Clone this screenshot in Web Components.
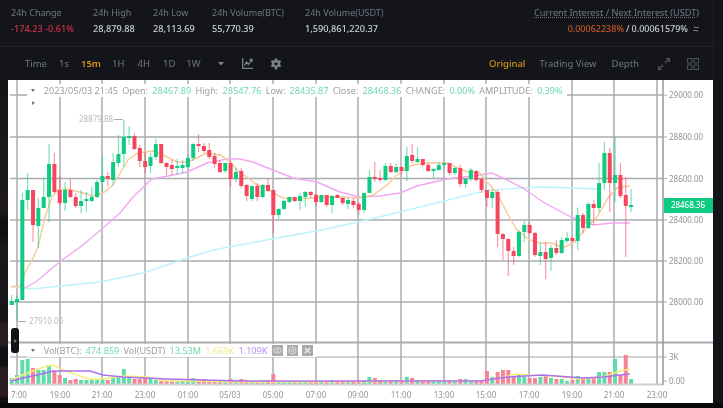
<!DOCTYPE html>
<html>
<head>
<meta charset="utf-8">
<style>
	html { background: #14151a; overflow: hidden; }
	body { margin: 0; width: 723px; height: 408px; overflow: hidden; filter: blur(.5px); font-family: "Noto Sans", "Liberation Sans", sans-serif; }
</style>
</head>
<body>

<template id="t-page-shell">
	<style>
		:host { display: flex; flex-direction: column; width: 723px; height: 408px; background: #14151a; }
		.top { width: 713px; border-right: 1px solid #1f2127; }
		.main { display: flex; height: 323px; }
		.strip { width: 8px; background: linear-gradient(#17151a 0, #201a1e 130px, #0f1012 140px, #0f1012 155px, #1d181c 165px, #16151a 240px, #2a1c22 245px, #2a1c22 265px, #101116 268px, #101116 285px, #2a1c22 288px, #2a1c22 315px, #101014 318px); }
		.foot { height: 5px; background: #08090b; }
	</style>
	<div class="top"><slot name="top"></slot></div>
	<div class="main"><div class="strip"></div><slot name="main"></slot></div>
	<div class="foot"></div>
</template>

<template id="t-stats-bar">
	<style>
		:host { display: flex; height: 47px; box-sizing: border-box; padding: 6px 14px 0 11px; border-bottom: 1px solid #22242a; }
		.right { margin-left: auto; display: flex; flex-direction: column; align-items: flex-end; gap: 2px; }
		.title { font-size: 9.2px; line-height: 14px; color: #727a85; text-decoration: underline dotted #727a85; }
		.rates { font-size: 9px; line-height: 13px; color: #c8ccd2; font-weight: 500; display: flex; gap: 2px; align-items: center; }
		.rates b { font-weight: 500; color: #c4562a; }
		svg { margin-left: 3px; }
	</style>
	<slot></slot>
	<div class="right">
		<span class="title">Current Interest / Next Interest (USDT)</span>
		<span class="rates"><b>0.00062238%</b><span>/</span><span>0.00061579%</span>
			<svg width="6" height="6" viewBox="0 0 6 6" fill="none" stroke="#6f7680" stroke-width="1"><path d="M6 1.500H1L2.200 .4M0 4.500H5L3.800 5.600"/></svg>
		</span>
	</div>
</template>

<template id="t-stat-item">
	<style>
		:host { display: flex; flex-direction: column; gap: 3px; width: var(--w); }
		.l { font-size: 9px; line-height: 13px; color: #6f7680; white-space: nowrap; }
		.v { font-size: 9.2px; line-height: 13px; color: #c9ced6; font-weight: 500; white-space: nowrap; }
		:host([down]) .v { color: #cf304a; }
	</style>
	<span class="l"></span>
	<span class="v"></span>
</template>

<template id="t-tool-bar">
	<style>
		:host { display: flex; align-items: center; height: 33px; padding: 0 14px 0 25px; box-sizing: border-box; }
		.right { margin-left: auto; display: flex; align-items: center; }
		.g { display: flex; align-items: center; }
	</style>
	<div class="g"><slot name="left"></slot></div>
	<div class="right"><slot name="right"></slot></div>
</template>

<template id="t-tool-btn">
	<style>
		:host { display: block; margin-right: var(--mr, 13px); white-space: nowrap; line-height: 14px; font-size: 9.5px; color: #6f7680; }
		:host([active]) { color: #d6941c; font-weight: 600; }
		:host([soft]) { color: #d6941c; font-weight: 500; }
	</style>
	<slot></slot>
</template>

<template id="t-chart-legend">
	<style>
		:host { position: absolute; left: 19px; height: 13px; padding: 0 4px 0 3.500px; background: #fff; display: flex; align-items: center; gap: 4.200px; font-size: 9.150px; line-height: 12px; color: #9a9ea6; white-space: nowrap; }
		.caret { width: 0; height: 0; border-left: 2.500px solid transparent; border-right: 2.500px solid transparent; border-top: 3.500px solid #6e7279; margin-right: 5px; }
	</style>
	<span class="caret"></span>
	<slot></slot>
</template>

<template id="t-kline-chart">
	<style>
		:host { display: block; position: relative; width: 705px; height: 323px; background: #fff; }
		svg { display: block; }
		text { font-family: "Noto Sans", "Liberation Sans", sans-serif; font-size: 8px; fill: #909398; }
		.handle { position: absolute; left: 3px; top: 248px; width: 8px; height: 25px; border-radius: 3px; background: #111214; display: flex; align-items: center; justify-content: center; }
		.handle i { width: 0; height: 0; border-top: 2px solid transparent; border-bottom: 2px solid transparent; border-left: 3px solid #777; }
		.tri { position: absolute; left: 24px; top: 21px; width: 0; height: 0; border-top: 2.500px solid transparent; border-bottom: 2.500px solid transparent; border-left: 3.500px solid #7a7e85; }
		.btns { display: flex; gap: 4px; margin-left: 0; }
		.btns span { width: 11px; height: 11px; background: #a9abaf; display: flex; align-items: center; justify-content: center; }
		.up { color: #6fd8ab; }
		.y { color: #f2ea8e; }
		.p { color: #b98cf0; }
		#l1 { top: 4px; }
		#l2 { top: 264px; }
	</style>
	<svg id="s" width="705" height="323" viewBox="8 80 705 323"></svg>
	<chart-legend id="l1">
		<span>2023/05/03 21:45</span><span>Open:</span><span class="up">28467.89</span><span>High:</span><span class="up">28547.76</span><span>Low:</span><span class="up">28435.87</span><span>Close:</span><span class="up">28468.36</span><span>CHANGE:</span><span class="up">0.00%</span><span>AMPLITUDE:</span><span class="up">0.39%</span>
	</chart-legend>
	<span class="tri"></span>
	<chart-legend id="l2">
		<span>Vol(BTC):</span><span class="up">474.859</span><span>Vol(USDT)</span><span class="up">13.53M</span><span class="y">1.669K</span><span class="p">1.109K</span>
		<span class="btns">
			<span><svg width="9" height="9" viewBox="0 0 9 9" fill="none" stroke="#e2e2e2"><ellipse cx="4.500" cy="4.500" rx="3.800" ry="2.500"/><circle cx="4.500" cy="4.500" r="1"/></svg></span>
			<span><svg width="9" height="9" viewBox="0 0 9 9" fill="none" stroke="#e2e2e2"><path d="M4.500.8 7.800 2.700V6.300L4.500 8.200 1.200 6.300V2.700Z"/><circle cx="4.500" cy="4.500" r="1.200"/></svg></span>
			<span><svg width="9" height="9" viewBox="0 0 9 9" fill="none" stroke="#eee" stroke-width="1.300"><path d="M2 2 7 7M7 2 2 7"/></svg></span>
		</span>
	</chart-legend>
	<div class="handle"><i></i></div>
</template>

<page-shell>
	<stats-bar slot="top">
		<stat-item label="24h Change" value="-174.23 -0.61%" down style="--w:82px"></stat-item>
		<stat-item label="24h High" value="28,879.88" style="--w:60px"></stat-item>
		<stat-item label="24h Low" value="28,113.69" style="--w:59px"></stat-item>
		<stat-item label="24h Volume(BTC)" value="55,770.39" style="--w:93px"></stat-item>
		<stat-item label="24h Volume(USDT)" value="1,590,861,220.37" style="--w:90px"></stat-item>
	</stats-bar>

	<tool-bar slot="top">
		<tool-btn slot="left" style="--mr:12px">Time</tool-btn>
		<tool-btn slot="left" style="--mr:12px">1s</tool-btn>
		<tool-btn slot="left" active style="--mr:11px">15m</tool-btn>
		<tool-btn slot="left" style="--mr:13px">1H</tool-btn>
		<tool-btn slot="left" style="--mr:13px">4H</tool-btn>
		<tool-btn slot="left" style="--mr:11px">1D</tool-btn>
		<tool-btn slot="left" style="--mr:17px">1W</tool-btn>
		<tool-btn slot="left" style="--mr:18px"><svg width="6" height="4" viewBox="0 0 6 4" style="display:block"><path d="M0 0H6L3 3.500Z" fill="#7c828c"/></svg></tool-btn>
		<tool-btn slot="left" style="--mr:17px"><svg width="11" height="11" viewBox="0 0 11 11" fill="none" stroke="#7c828c" stroke-width="1.300" style="display:block"><path d="M.7 0V10.300H11M2.500 7.500 4.500 4 6.500 6.500 10 1.500M7.500 1.500H10V4"/></svg></tool-btn>
		<tool-btn slot="left"><svg width="12" height="12" viewBox="0 0 13 13" style="display:block"><path fill="#7c828c" fill-rule="evenodd" d="M5.300.5H7.700L8 2.200 9.300 2.900 10.900 2.200 12.100 4.300 10.800 5.400V6.900L12.100 8 10.900 10.100 9.300 9.400 8 10.100 7.700 12.500H5.300L5 10.100 3.700 9.400 2.100 10.100.9 8 2.200 6.900V5.400L.9 4.300 2.100 2.200 3.700 2.900 5 2.200ZM6.500 4.500A1.800 1.800 0 1 0 6.500 8.100 1.800 1.800 0 1 0 6.500 4.500Z"/></svg></tool-btn>

		<tool-btn slot="right" soft style="--mr:14px">Original</tool-btn>
		<tool-btn slot="right" style="--mr:15px">Trading View</tool-btn>
		<tool-btn slot="right" style="--mr:19px">Depth</tool-btn>
		<tool-btn slot="right" style="--mr:17px"><svg width="12" height="12" viewBox="0 0 12 12" fill="none" stroke="#4f545c" stroke-width="1.200" style="display:block"><path d="M7 5 11.500.5M8 .5H11.500V4M5 7 .5 11.500M.5 8V11.500H4"/></svg></tool-btn>
		<tool-btn slot="right" style="--mr:0"><svg width="12" height="12" viewBox="0 0 12 12" fill="none" stroke="#4f545c" style="display:block"><path d="M.5.5H5V5H.5ZM7 .5H11.500V5H7ZM.5 7H5V11.500H.5ZM7 7H11.500V11.500H7Z"/></svg></tool-btn>
	</tool-bar>

	<kline-chart slot="main"></kline-chart>
</page-shell>

<script>
// candles, as screen y: [bodyTop, bodyBottom, wickTop, wickBottom, up]
const CANDLES = [
[301,305,295,305,1],[299,302,295,321,1],[200,300,193,300,1],[190,200,173,210,1],[190,225,190,242,0],[208,226,198,248,1],[197,208,178,208,1],[164,197,144,222,1],
[164,192,153,193,0],[190,203,176,205,0],[190,203,182,211,1],[190,197,179,198,0],[197,206,193,208,0],[201,206,190,213,1],[199,201,192,212,1],[197,201,187,202,1],
[182,197,180,198,1],[176,182,156,192,1],[176,179,172,186,0],[162,180,153,185,1],[154,163,135,167,1],[137,154,120,167,1],[136,138,126,145,1],[136,149,133,150,0],
[148,161,145,167,0],[161,167,152,173,0],[157,166,153,173,1],[144,157,139,160,1],[144,163,144,164,0],[163,167,162,175,0],[165,169,160,175,0],[166,168,159,174,1],
[165,168,160,173,1],[158,167,155,168,1],[144,158,143,161,1],[144,146,134,152,0],[146,151,143,153,0],[150,157,143,159,0],[156,164,153,168,0],[163,172,160,173,0],
[163,171,163,173,1],[163,179,160,187,0],[172,179,168,182,1],[171,186,168,188,0],[185,196,184,201,0],[186,199,186,201,1],[186,197,183,201,0],[185,197,184,198,1],
[185,191,179,192,0],[190,215,190,233,0],[209,215,208,220,1],[201,209,200,210,1],[197,202,197,203,1],[197,201,197,202,0],[196,201,193,210,1],[192,197,191,207,1],
[192,195,191,198,0],[195,202,193,207,0],[195,202,195,203,1],[195,205,195,207,0],[196,205,195,213,1],[195,198,194,198,0],[198,203,197,205,0],[200,204,198,209,1],
[201,205,198,208,0],[204,210,202,215,0],[193,210,193,213,1],[177,193,170,193,1],[177,179,162,182,0],[178,180,170,182,0],[166,180,163,181,1],[166,172,163,173,0],
[167,172,164,173,1],[167,171,166,175,0],[156,171,147,181,1],[155,161,144,163,0],[159,162,147,163,1],[159,165,159,167,0],[165,171,163,172,0],[169,171,168,178,1],
[165,170,162,171,1],[163,165,162,167,1],[163,173,163,175,0],[168,173,167,175,1],[168,184,165,187,0],[179,184,178,188,1],[170,179,168,181,1],[171,180,170,182,0],
[179,190,178,193,0],[190,198,190,207,0],[192,198,189,208,1],[192,234,190,247,0],[234,239,233,260,0],[239,251,238,276,0],[251,256,247,265,0],[232,256,230,257,1],
[225,232,221,242,1],[225,233,223,234,0],[233,255,232,257,0],[252,256,243,265,1],[252,259,242,279,0],[248,258,245,271,1],[248,253,240,255,0],[240,253,237,254,1],
[238,241,232,243,1],[238,241,236,242,0],[215,241,208,250,1],[215,228,213,233,0],[204,228,202,229,1],[204,208,200,225,0],[183,208,163,212,1],[153,183,142,190,1],
[153,183,148,212,0],[175,183,137,202,1],[175,196,163,198,0],[195,206,177,257,0],[205,207,189,212,1]
]
const VOLS = [6,9,24,25,16,14,14,19,13,9,6,4,5,4,4,4,4,6,4,7,8,15,6,5,5,7,5,4,3,3,3,3,3,3,6,5,5,4,4,3,3,5,4,
5,4,3,3,4,4,10,3,2,2,2,3,3,2,3,3,3,4,3,3,3,3,4,4,7,6,4,3,4,4,3,7,6,4,3,3,4,3,3,3,3,5,5,4,3,
4,13,7,12,14,14,7,9,7,6,6,7,9,6,5,5,3,4,8,5,5,6,12,12,12,25,9,29,5]

const MA7 = [[11,287],[20,286],[25,273],[33,258],[38,247],[45,217],[52,197],[58,190],[67,189],[75,191],[83,193],[92,196],[103,193],[113,185],[122,170],[128,160],[138,153],[153,151],[163,155],[177,162],[188,162],[207,153],[220,155],[230,162],[240,173],[247,177],[257,185],[267,187],[273,193],[283,198],[297,199],[313,198],[327,197],[340,197],[360,198],[373,195],[387,185],[400,172],[413,165],[427,163],[447,163],[467,172],[480,173],[487,182],[497,193],[507,213],[517,230],[530,240],[540,243],[552,243],[563,248],[575,242],[587,227],[597,217],[608,198],[617,188],[630,186]]
const MA25 = [[25,288],[37,281],[50,270],[62,260],[83,245],[103,228],[120,213],[133,197],[152,179],[173,175],[187,172],[207,163],[227,159],[240,159],[253,162],[273,170],[293,178],[317,182],[340,192],[360,197],[380,196],[400,193],[417,186],[447,179],[480,175],[492,173],[503,178],[523,188],[543,202],[573,218],[593,225],[613,223],[630,223]]
const MA99 = [[11,286],[33,289],[60,286],[100,282],[143,273],[167,265],[187,258],[213,250],[240,245],[277,238],[317,231],[358,222],[400,212],[440,202],[480,192],[490,190],[523,188],[543,187],[573,188],[597,189]]
const VMA_Y = [[11,380],[20,376],[33,371],[43,367],[53,365],[63,370],[77,375],[90,379],[103,379],[123,376],[147,377],[167,381],[187,381],[240,382],[480,381],[500,378],[517,374],[530,375],[553,376],[580,379],[603,377],[620,371],[630,369]]
const VMA_P = [[11,381],[23,378],[37,375],[53,371],[73,371],[90,371],[103,375],[123,377],[167,379],[240,381],[480,381],[507,377],[543,375],[583,378],[603,377],[620,375],[630,374]]

const PRICES = [[95,'29000.00'],[137,'28800.00'],[178.5,'28600.00'],[220,'28400.00'],[261,'28200.00'],[302,'28000.00']]
const TIMES = [[19,'7:00'],[60,'19:00'],[102,'21:00'],[145,'23:00'],[188,'01:00'],[230,'05/03'],[273,'05:00'],[316,'07:00'],[358,'09:00'],[401,'11:00'],[444,'13:00'],[486,'15:00'],[529,'17:00'],[572,'19:00'],[614,'21:00'],[657,'23:00']]

const tpl = (id) => document.getElementById(id).content.cloneNode(true)
const path = (pts) => 'M' + pts.map((p) => p.join(' ')).join('L')

// plain elements: just stamp their template
for(const name of ['page-shell', 'stats-bar', 'tool-bar', 'tool-btn', 'chart-legend']) {
	customElements.define(name, class extends HTMLElement {
		constructor() {
			super()
			this.attachShadow({mode: 'open'}).appendChild(tpl('t-' + name))
		}
	})
}

customElements.define('stat-item', class extends HTMLElement {
	connectedCallback() {
		if(this.shadowRoot) return
		const root = this.attachShadow({mode: 'open'})
		root.appendChild(tpl('t-stat-item'))
		root.querySelector('.l').textContent = this.getAttribute('label')
		root.querySelector('.v').textContent = this.getAttribute('value')
	}
})

customElements.define('kline-chart', class extends HTMLElement {
	constructor() {
		super()
		const root = this.attachShadow({mode: 'open'})
		root.appendChild(tpl('t-kline-chart'))
		root.getElementById('s').innerHTML = this.draw()
	}

	draw() {
		let o = ''
		const GRID = '#a9abaf'
		for(const [y] of PRICES) o += `<path d="M10 ${y}H663" stroke="${GRID}" stroke-width="1.500"/>`
		o += `<path d="M10 357H663" stroke="#c4c5c8" stroke-width="1.300"/>`
		for(const [x] of TIMES) {
			const gx = x === 19 ? 17 : x
			o += `<path d="M${gx} 80V385" stroke="${GRID}" stroke-width="1.500"/>`
		}
		// volumes
		VOLS.forEach((h, n) => {
			const x = 11.66 + n * 5.34
			const c = CANDLES[n][4] ? '#62dbaa' : '#f78495'
			o += `<rect x="${x - 2}" y="${384 - h}" width="4" height="${h}" fill="${c}"/>`
		})
		o += `<path d="M10 384.500H663" stroke="#cfd0d3" stroke-width="2"/>`
		o += `<path d="${path(VMA_Y)}" fill="none" stroke="#f5ee7a" stroke-width="1.400"/>`
		o += `<path d="${path(VMA_P)}" fill="none" stroke="#ad70f0" stroke-width="1.500"/>`
		// moving averages under the candles
		o += `<path d="${path(MA99)}" fill="none" stroke="#bff2fa" stroke-width="1.400"/>`
		o += `<path d="${path(MA25)}" fill="none" stroke="#f0a8f2" stroke-width="1.400"/>`
		o += `<path d="${path(MA7)}" fill="none" stroke="#f8c998" stroke-width="1.400"/>`
		CANDLES.forEach((c, n) => {
			const x = 11.66 + n * 5.34
			const col = c[4] ? '#0ecb81' : '#f6465d'
			o += `<path d="M${x} ${c[2]}V${c[3]}" stroke="${col}" stroke-opacity=".55" stroke-width="1.200"/>`
			o += `<rect x="${x - 2}" y="${c[0]}" width="4" height="${Math.max(c[1] - c[0], 2)}" fill="${col}"/>`
		})
		// high / low marks
		o += `<text x="79" y="122" style="fill:#b8babd">28879.88</text><path d="M114 119.500H123" stroke="#aaa"/>`
		o += `<text x="29" y="324" style="fill:#b8babd">27910.00</text><path d="M18 321.500H26" stroke="#aaa"/>`
		// panel divider + axes
		o += `<path d="M8 342.500H713" stroke="#a9abaf" stroke-width="2"/>`
		o += `<path d="M663 80V385" stroke="#96989c" stroke-width="1.500"/>`
		for(const [y, t] of PRICES) {
			o += `<path d="M663 ${y}H667" stroke="#a9aaae"/><text x="669" y="${y + 3}">${t}</text>`
		}
		o += `<path d="M663 357H667M663 381H667" stroke="#a9aaae"/><text x="669" y="360">3K</text><text x="669" y="384">0.00</text>`
		for(const [x, t] of TIMES) o += `<text x="${x}" y="398" text-anchor="middle">${t}</text>`
		// current price tag
		o += `<rect x="664" y="198" width="49" height="15" fill="#0ecb81"/><text x="688" y="208" text-anchor="middle" style="fill:#fff;font-weight:500">28468.36</text>`
		return o
	}
})
</script>
</body>
</html>
